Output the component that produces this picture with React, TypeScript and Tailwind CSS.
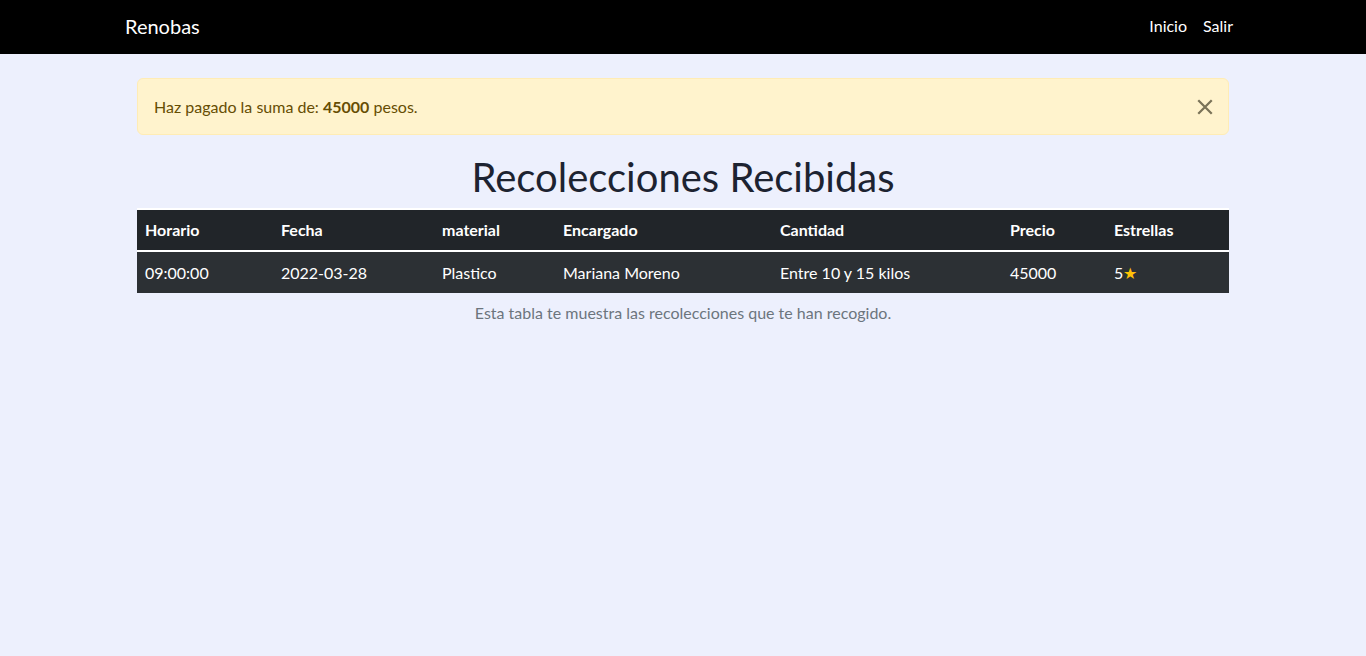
import React from "react";

const cols = [
  { h: "Horario", v: "09:00:00", w: "w-[136px]" },
  { h: "Fecha", v: "2022-03-28", w: "w-[161px]" },
  { h: "material", v: "Plastico", w: "w-[121px]" },
  { h: "Encargado", v: "Mariana Moreno", w: "w-[217px]" },
  { h: "Cantidad", v: "Entre 10 y 15 kilos", w: "w-[230px]" },
  { h: "Precio", v: "45000", w: "w-[104px]" },
];

export default function App() {
  return (
    <div
      className="min-h-[656px] bg-[#edf0fd] text-[#212529]"
      style={{ fontFamily: "Lato, 'Noto Sans', sans-serif" }}
    >
      <nav className="h-[54px] bg-black">
        <div className="mx-auto flex h-full w-[1140px] items-center justify-between px-3 pb-[2px]">
          <span className="text-[20px] text-white">Renobas</span>
          <div className="flex text-[16px] text-white">
            <span className="px-2">Inicio</span>
            <span className="px-2">Salir</span>
          </div>
        </div>
      </nav>
      <main className="mx-auto w-[1092px] pt-6">
        <div className="flex h-[57px] items-center justify-between rounded-[6px] border border-[#ffecb5] bg-[#fff3cd] pl-4 pr-[14px] text-[16px] text-[#664d03]">
          <span>
            Haz pagado la suma de: <b>45000</b> pesos.
          </span>
          <svg width="18" height="18" viewBox="0 0 16 16">
            <path d="M2 2 L14 14 M14 2 L2 14" stroke="#7a7358" strokeWidth="2" />
          </svg>
        </div>
        <h1 className="mt-[18px] text-center text-[40px] leading-[48px] font-normal text-[#1d2331]">
          Recolecciones Recibidas
        </h1>
        <div className="mt-[7px] border-t-2 border-white">
          <div className="flex h-[42px] items-center border-b-2 border-white bg-[#212529] text-[16px] font-bold text-white">
            {cols.map((c) => (
              <div key={c.h} className={`${c.w} px-2`}>
                {c.h}
              </div>
            ))}
            <div className="flex-1 px-2">Estrellas</div>
          </div>
          <div className="flex h-[41px] items-center bg-[#2c3034] text-[16px] text-white">
            {cols.map((c) => (
              <div key={c.h} className={`${c.w} px-2`}>
                {c.v}
              </div>
            ))}
            <div className="flex-1 px-2">
              5<span className="text-[#ffc107]">★</span>
            </div>
          </div>
        </div>
        <p className="mt-[8px] text-center text-[16px] text-[#6c757d]">
          Esta tabla te muestra las recolecciones que te han recogido.
        </p>
      </main>
    </div>
  );
}
